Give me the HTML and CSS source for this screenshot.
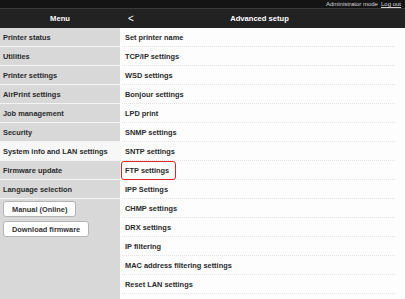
FILE: index.html
```html
<!DOCTYPE html>
<html lang="en">
<head>
  <meta charset="UTF-8" />
  <title>Advanced setup</title>
  <link rel="stylesheet" href="styles.css">
</head>
<body>
  <div class="topbar">
    <span>Administrator mode</span>
    <a href="#" class="logout">Log out</a>
  </div>
  <header class="header">
    <div class="header-menu">Menu</div>
    <div class="header-title">
      <span class="back">&lt;</span>
      <span>Advanced setup</span>
    </div>
  </header>
  <div class="main">
    <nav class="menu">
      <ul>
        <li>Printer status</li>
        <li>Utilities</li>
        <li>Printer settings</li>
        <li>AirPrint settings</li>
        <li>Job management</li>
        <li>Security</li>
        <li class="active">System info and LAN settings</li>
        <li>Firmware update</li>
        <li>Language selection</li>
      </ul>
      <div class="menu-buttons">
        <button>Manual (Online)</button>
        <button>Download firmware</button>
      </div>
    </nav>
    <section class="content">
      <ul class="list">
        <li>Set printer name</li>
        <li>TCP/IP settings</li>
        <li>WSD settings</li>
        <li>Bonjour settings</li>
        <li>LPD print</li>
        <li>SNMP settings</li>
        <li>SNTP settings</li>
        <li><span class="mark">FTP settings</span></li>
        <li>IPP Settings</li>
        <li>CHMP settings</li>
        <li>DRX settings</li>
        <li>IP filtering</li>
        <li>MAC address filtering settings</li>
        <li>Reset LAN settings</li>
      </ul>
    </section>
  </div>
</body>
</html>
```

FILE: styles.css
```css
:root {
  --dark: #222;
  --gray: #d8d8d8;
  --line: #e2e2e2;
  --red: #e02424;
}
html, body {
  height: 100%;
}
body {
  margin: 0;
  font-family: 'Liberation Sans', Arial, sans-serif;
  font-weight: 700;
  font-size: 7.4px;
  color: #2a2a2a;
  background: #fdfdfd;
  display: flex;
  flex-direction: column;
  overflow: hidden;
}
ul {
  list-style: none;
  margin: 0;
  padding: 0;
}
.topbar {
  height: 9px;
  line-height: 9px;
  background: #141414;
  color: #d4d4d4;
  font-size: 6px;
  font-weight: 400;
  display: flex;
  justify-content: flex-end;
  gap: 3px;
  padding-right: 4px;
  border-bottom: 1px solid #3a3a3a;
  box-sizing: border-box;
}
.logout {
  color: #d4d4d4;
  text-decoration: underline;
}
.header {
  height: 19px;
  line-height: 20px;
  background: var(--dark);
  color: #fff;
  font-size: 7.6px;
  display: grid;
  grid-template-columns: 120px 1fr;
}
.header-menu {
  text-align: center;
}
.header-title {
  display: flex;
  justify-content: center;
  padding-right: 6px;
  position: relative;
}
.back {
  position: absolute;
  left: 8px;
  font-size: 10px;
  font-weight: 400;
}
.main {
  flex: 1;
  display: grid;
  grid-template-columns: 120px 1fr;
}
.menu {
  background: var(--gray);
}
.menu li {
  height: 18px;
  line-height: 19px;
  padding-left: 3px;
  border-bottom: 1px solid #f4f4f4;
}
.menu li.active {
  background: #f7f7f7;
  margin-right: -1px;
}
.menu-buttons {
  display: flex;
  flex-direction: column;
  align-items: flex-start;
  gap: 4px;
  padding: 2px 0 0 3px;
}
.menu-buttons button {
  font-family: inherit;
  font-weight: 700;
  font-size: 7.4px;
  color: #333;
  height: 16px;
  padding: 0 8px;
  background: #fff;
  border: 1px solid #b4b4b4;
  border-radius: 3px;
}
.list {
  padding: 0 10px 0 2px;
}
.list li {
  height: 18px;
  line-height: 19px;
  padding-left: 3px;
  border-bottom: 1px dotted var(--line);
}
.mark {
  display: inline-block;
  height: 17px;
  line-height: 18px;
  margin-left: -4px;
  padding: 0 6px 0 3px;
  border: 1px solid var(--red);
  border-radius: 3px;
}
```
